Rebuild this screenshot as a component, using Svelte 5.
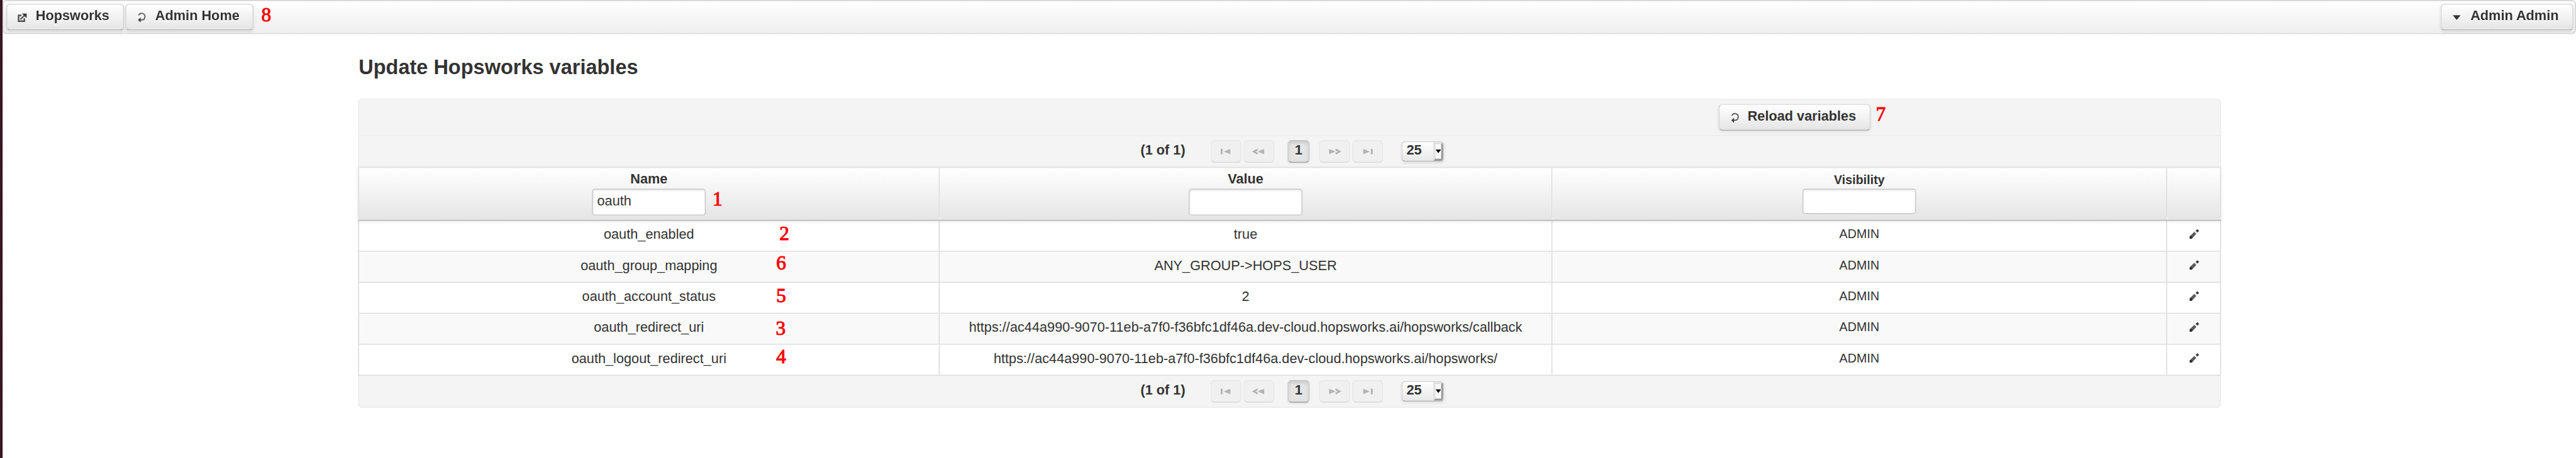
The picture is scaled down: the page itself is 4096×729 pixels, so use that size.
<script>
  const rows = [
    { name: 'oauth_enabled', value: 'true', note: '2', x: 812, y: 3.4 },
    { name: 'oauth_group_mapping', value: 'ANY_GROUP->HOPS_USER', note: '6', x: 806, y: 0 },
    { name: 'oauth_account_status', value: '2', note: '5', x: 806, y: 3.6 },
    { name: 'oauth_redirect_uri', value: 'https://ac44a990-9070-11eb-a7f0-f36bfc1df46a.dev-cloud.hopsworks.ai/hopsworks/callback', note: '3', x: 805, y: 6.6 },
    { name: 'oauth_logout_redirect_uri', value: 'https://ac44a990-9070-11eb-a7f0-f36bfc1df46a.dev-cloud.hopsworks.ai/hopsworks/', note: '4', x: 806, y: 1.7 }
  ];
</script>

{#snippet refresh()}
  <svg class="icon" viewBox="0 0 32 32">
    <path d="M10.8 12.6 A6.4 6.4 0 1 1 17 21.6 L12 21.6" fill="none" stroke="#666" stroke-width="2.4" />
    <path d="M9.5 21.7 L14.8 16.8 V26.6 Z" fill="#3c3c3c" />
  </svg>
{/snippet}

{#snippet paginator()}
  <div class="paginator">
    <span class="count">(1 of 1)</span>
    <span class="pg first"><svg viewBox="0 0 32 32"><path d="M6 9H9.6V19.5H6Z M24.5 9V19.5L12 14.2Z" /></svg></span>
    <span class="pg"><svg viewBox="0 0 32 32"><path d="M26 9V19.5L13.5 14.2Z" /><path class="line" d="M13.5 10 L6 14.2 L13.5 18.5" /></svg></span>
    <span class="page">1</span>
    <span class="pg"><svg viewBox="0 0 32 32"><path d="M5.5 9V19.5L18 14.2Z" /><path class="line" d="M18 10 L25.5 14.2 L18 18.5" /></svg></span>
    <span class="pg last"><svg viewBox="0 0 32 32"><path d="M7.5 9V19.5L20 14.2Z M22.2 9H25.8V19.5H22.2Z" /></svg></span>
    <span class="select"><span class="num">25</span><span class="drop"><svg viewBox="0 0 12 28"><path d="M0.3 10H11.7L6 17.5Z" fill="#000" /></svg></span></span>
  </div>
{/snippet}

<div class="window">
  <div class="page-body">
    <div class="edge"></div>
    <div class="content">
      <header>
        <button class="btn hops">
          <svg class="icon" viewBox="0 0 32 32">
            <path d="M14.5 12.7H9V24H20V18.5" fill="none" stroke="#505050" stroke-width="3" />
            <path d="M12.5 20.5 L20.5 12.5" stroke="#606060" stroke-width="3" />
            <path d="M15.5 9H24.5V18L21.2 15.2L18 12Z" fill="#3c3c3c" />
          </svg>
          Hopsworks
        </button>
        <button class="btn home">{@render refresh()}Admin Home</button>
        <span class="note n8">8</span>
        <button class="btn user">
          <svg class="icon" viewBox="0 0 32 32"><path d="M8 12.5H23L15.5 21.5Z" fill="#333" /></svg>
          Admin Admin
        </button>
      </header>
      <main>
        <h1>Update Hopsworks variables</h1>
        <section class="table">
          <div class="bar">
            <button class="btn reload">{@render refresh()}Reload variables</button>
            <span class="note n7">7</span>
          </div>
          {@render paginator()}
          <div class="row head">
            <div class="th"><span>Name</span><div class="input">oauth</div><span class="note n1">1</span></div>
            <div class="th"><span>Value</span><div class="input"></div></div>
            <div class="th vis"><span>Visibility</span><div class="input"></div></div>
            <div class="th"></div>
          </div>
          {#each rows as r}
            <div class="row data">
              <div class="td">{r.name}<span class="note" style="left:{r.x}px;top:{r.y}px">{r.note}</span></div>
              <div class="td">{r.value}</div>
              <div class="td admin">ADMIN</div>
              <div class="td edit">
                <svg class="pencil" viewBox="0 0 19 19">
                  <path d="M0.3 18.7V14.2L9.3 5.4L13.3 9.5L4.6 18.7Z" fill="#5c5c5c" />
                  <path d="M0.3 18.7V14.6L3 13L6 16.2L4.4 18.7Z" fill="#2d2d2d" />
                  <path d="M11.2 4.2L14.7 7.8" stroke="#ddd" stroke-width="1.6" />
                  <path d="M12 3.4L15.3 0.3L18.7 3.5L15.5 6.7Z" fill="#383838" />
                </svg>
              </div>
            </div>
          {/each}
          {@render paginator()}
        </section>
      </main>
    </div>
  </div>
</div>

<style>
  :global(body) { margin: 0; background: #fff; overflow: hidden; }
  .window { width: 4096px; height: 729px; overflow: hidden; }
  .page-body {
    width: 4978px; height: 886px; display: flex; box-sizing: border-box;
    transform: scale(0.82282); transform-origin: 0 0;
    font-family: "Liberation Sans", Arial, sans-serif; font-size: 26.4px; color: #333; background: #fff;
  }
  .page-body * { box-sizing: border-box; }
  .edge { width: 5px; background: linear-gradient(90deg, #3c1624 60%, #1f0d15); flex: none; }
  .content { flex: 1; min-width: 0; }
  header {
    height: 66px; border: 2px solid #d5d5d5; border-radius: 8px; padding: 5px 3px 0 5px;
    background: linear-gradient(#fff, #eee); display: flex; align-items: flex-start; position: relative;
  }
  .btn {
    font: bold 26.4px "Liberation Sans", Arial, sans-serif; color: #333; height: 52px; margin: 0; white-space: nowrap;
    border: 2px solid #d5d5d5; border-top-color: #dcdcdc; border-bottom-color: #b3b3b3; border-radius: 8px;
    background: linear-gradient(#fff, #e5e5e5); box-shadow: 0 2px 5px rgba(0,0,0,.09);
    text-shadow: 0 2px 0 rgba(255,255,255,.7);
    display: flex; align-items: center; padding: 0 0 6px 0;
  }
  .icon { width: 32px; height: 32px; flex: none; position: relative; top: 2.5px; }
  .hops { width: 228px; padding-left: 13px; margin-right: 2px; }
  .hops .icon { margin-right: 10px; }
  .home { width: 248px; padding-left: 13px; }
  .home .icon { margin-right: 11px; }
  .user { width: 257px; padding-left: 14px; margin-left: auto; }
  .user .icon { margin-right: 10px; }
  main { padding: 0 0 0 688px; }
  h1 { margin: 0; height: 125px; font-size: 39.5px; line-height: 46px; padding-top: 40.5px; }
  .table {
    width: 3600px; height: 598px; border: 2px solid #ececec; border-radius: 8px; background: #f4f4f4; margin-left: -1px;
  }
  .bar { height: 70px; border-bottom: 2px solid #ececec; position: relative; padding: 8px 0 0 2627px; }
  .reload { width: 294px; padding-left: 13px; }
  .reload .icon { margin-right: 9px; }
  .paginator {
    height: 60px; display: flex; align-items: center; padding-left: 1510px; font-weight: bold;
  }
  .count { width: 135px; line-height: 30px; padding-bottom: 6px; }
  .pg {
    width: 60px; height: 44px; border: 2px solid #e8e8e8; border-bottom-color: #dcdcdc; border-radius: 8px;
    background: #f0f0f0; margin-right: 4px; display: flex; justify-content: center; align-items: center; padding: 4px 0 0 0;
  }
  .pg svg { width: 32px; height: 32px; fill: #b3b3b3; }
  .pg .line { fill: none; stroke: #b3b3b3; stroke-width: 3.4; }
  .page {
    width: 43px; height: 44px; margin: 0 18px 0 21px; border: 2px solid #cfcfcf; border-top-color: #c4c4c4; border-bottom-color: #aaa; border-radius: 8px;
    background: #e4e4e4; box-shadow: inset 0 3px 7px rgba(0,0,0,.13), 0 2px 3px rgba(0,0,0,.07);
    display: flex; align-items: center; justify-content: center; padding-bottom: 6px; text-shadow: 0 2px 0 rgba(255,255,255,.7);
  }
  .select {
    margin-left: 31px; width: 83px; height: 40px; border: 2px solid #d5d5d5; border-bottom-color: #b3b3b3; border-radius: 8px;
    background: linear-gradient(#fff, #e8e8e8); display: flex; box-shadow: 0 2px 5px rgba(0,0,0,.09); overflow: hidden;
  }
  .num { width: 60px; line-height: 31px; padding-left: 8px; text-shadow: 0 2px 0 rgba(255,255,255,.7); }
  .drop { width: 19px; height: 36px; border: 4px solid #e0e0e0; border-right-color: #999; border-bottom-color: #999; background: #fafafa; display: flex; }
  .drop svg { width: 11px; height: 28px; }
  .row { display: grid; grid-template-columns: 1124px 1184px 1188px 104px; margin: 0 -2px; }
  .head { height: 104px; border-top: 2px solid #e2e2e2; border-bottom: 2px solid #b5b5b5; background: #f0f0f0; position: relative; box-shadow: 0 2px 5px rgba(0,0,0,.09); z-index: 1; }
  .th {
    border-right: 2px solid #ddd; background: linear-gradient(#fff, #e5e5e5); border-bottom-right-radius: 8px; border-bottom-left-radius: 8px;
    display: flex; flex-direction: column; align-items: center; font-weight: bold; padding-top: 6px; position: relative;
    text-shadow: 0 2px 0 rgba(255,255,255,.7);
  }
  .th:first-child, .td:first-child { border-left: 2px solid #ddd; }
  .th span:first-child { line-height: 30px; height: 34px; }
  .th .input {
    width: 220px; height: 52px; border: 2px solid #ccc; border-radius: 6px; background: #fff; padding-left: 8px;
    box-shadow: inset 0 2px 4px rgba(0,0,0,.09); font-weight: normal; line-height: 42px;
  }
  .vis { font-size: 24px; }
  .th.vis span:first-child { line-height: 34px; }
  .th.vis .input { height: 49px; }
  .data { height: 60px; background: #fff; border-bottom: 2px solid #ddd; }
  .data:nth-child(odd) { background: #f9f9f9; }
  .td { border-right: 2px solid #ddd; display: flex; align-items: center; justify-content: center; padding-bottom: 6px; position: relative; white-space: nowrap; }
  .admin { font-size: 24px; }
  .edit { padding-left: 2px; padding-bottom: 7px; }
  .pencil { width: 19px; height: 19px; }
  .note {
    position: absolute; font: 38px/42px "Liberation Serif", "Times New Roman", serif; color: #f00; text-shadow: none;
    -webkit-text-stroke: 1.3px #f00;
  }
  .n8 { left: 498px; top: 5px; }
  .n7 { left: 2931px; top: 6px; }
  .n1 { left: 683px; top: 38px; }
</style>
